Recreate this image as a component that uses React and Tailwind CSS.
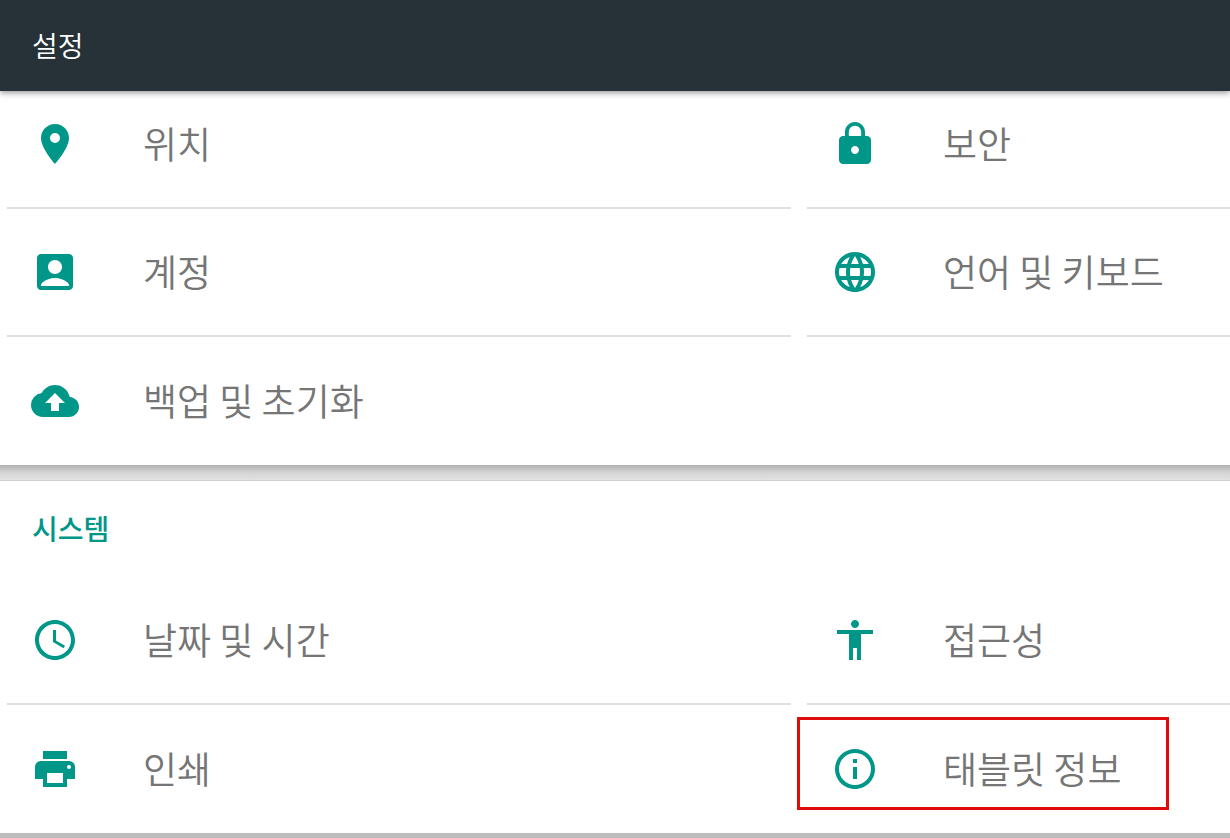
import {
  MdLocationOn,
  MdLock,
  MdAccountBox,
  MdLanguage,
  MdBackup,
  MdAccessTime,
  MdAccessibility,
  MdPrint,
  MdInfoOutline,
} from 'react-icons/md';

const personalItems = [
  { label: '위치', icon: MdLocationOn },
  { label: '보안', icon: MdLock },
  { label: '계정', icon: MdAccountBox },
  { label: '언어 및 키보드', icon: MdLanguage },
  { label: '백업 및 초기화', icon: MdBackup, last: true },
];

const systemItems = [
  { label: '날짜 및 시간', icon: MdAccessTime },
  { label: '접근성', icon: MdAccessibility },
  { label: '인쇄', icon: MdPrint, last: true },
  { label: '태블릿 정보', icon: MdInfoOutline, last: true, highlighted: true },
];

const SettingItem = ({ item }) => {
  const Icon = item.icon;
  return (
    <li className={"relative h-32 " + (item.last ? '' : 'border-b-2 border-[#dfdfdf]')}>
      <button type="button" className="flex items-center gap-16 w-full h-full px-6 text-left">
        <Icon className="size-12 shrink-0 text-[#009688]" />
        <span className="pb-0.5 text-[37px] leading-10 font-[350] whitespace-nowrap">{item.label}</span>
      </button>
      {item.highlighted && (
        <span className="absolute -left-2.5 top-3 w-[372px] h-[93px] border-3 border-[#e00b0b] pointer-events-none"></span>
      )}
    </li>
  );
};

const SettingGrid = ({ items }) => (
  <ul className="grid grid-cols-[1fr_423px] gap-x-4 pl-[7px]">
    {items.map(item => (
      <SettingItem key={item.label} item={item} />
    ))}
  </ul>
);

const App = () => {
  return (
    <div className="min-h-screen flex flex-col overflow-hidden bg-[#bdbdbd] text-[#757575] font-['Noto_Sans_CJK_KR',sans-serif]">
      <header className="relative z-10 flex items-center h-[91px] px-8 pb-0.5 bg-[#263238] shadow-[0_2px_6px_rgba(0,0,0,0.4)]">
        <h1 className="text-[28px] font-[350] text-white">설정</h1>
      </header>

      <main className="-mt-2.5">
        <section className="bg-white">
          <SettingGrid items={personalItems} />
        </section>

        <div className="h-4 bg-linear-to-b from-[#b0b1b1] via-[#d4d4d4] to-[#e2e2e2] border-b border-[#cfcfcf]"></div>

        <section className="bg-white">
          <h2 className="flex items-center h-24 px-8 pb-0.5 text-[28px] font-medium text-[#009688]">시스템</h2>
          <SettingGrid items={systemItems} />
        </section>
      </main>
    </div>
  );
};

export default App;
